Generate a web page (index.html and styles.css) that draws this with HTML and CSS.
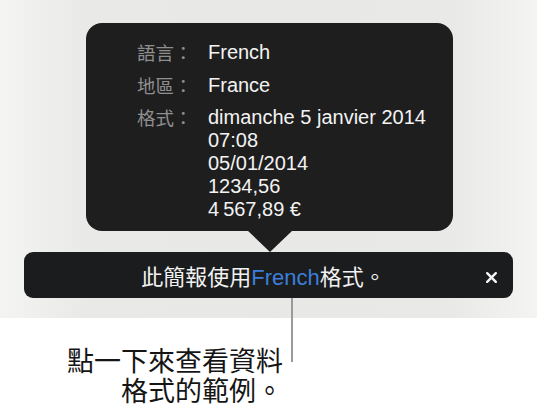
FILE: index.html
```html
<!DOCTYPE html>
<html lang="zh-Hant">
<head>
<meta charset="utf-8">
<title>格式</title>
<link rel="stylesheet" href="styles.css">
</head>
<body>
<div class="stage">
  <div class="popover">
    <div class="rows">
      <div class="label">語言：</div>
      <div class="value">French</div>
      <div class="label">地區：</div>
      <div class="value">France</div>
      <div class="label">格式：</div>
      <div class="value">
        <div>dimanche 5 janvier 2014</div>
        <div>07:08</div>
        <div>05/01/2014</div>
        <div>1234,56</div>
        <div>4&#8201;567,89 €</div>
      </div>
    </div>
  </div>
  <div class="bar">
    <span></span>
    <span class="msg">此簡報使用<span class="lang">French</span>格式。</span>
    <span class="close" aria-label="關閉">
      <svg width="11" height="11" viewBox="0 0 11 11"><path d="M1.2 1.2L9.8 9.8M9.8 1.2L1.2 9.8" stroke="#f4f4f4" stroke-width="2.4" stroke-linecap="round"/></svg>
    </span>
  </div>
  <div class="callout">
    <p class="note">點一下來查看資料<br>格式的範例。</p>
    <span class="leader"></span>
  </div>
</div>
</body>
</html>
```
FILE: styles.css
```css
html, body {
  margin: 0;
  padding: 0;
  background: #fff;
}
body {
  font-family: "Liberation Sans", "Noto Sans CJK TC", sans-serif;
}
.stage {
  width: 537px;
  height: 417px;
  box-sizing: border-box;
  padding-top: 23px;
  overflow: hidden;
  background:
    linear-gradient(#fff, #fff) left bottom / 100% 99px no-repeat,
    linear-gradient(to right, #f4f4f3 0%, #e9e9e7 16%, #e8e8e6 50%, #e9e9e7 84%, #f4f4f3 100%);
}
.popover {
  position: relative;
  margin-left: 86px;
  width: 367px;
  height: 208px;
  box-sizing: border-box;
  padding: 18px 0 0 51px;
  background: #1e1e1f;
  border-radius: 16px;
}
.popover::after {
  content: "";
  position: absolute;
  left: 161px;
  bottom: -21px;
  width: 0;
  height: 0;
  border-left: 23px solid transparent;
  border-right: 23px solid transparent;
  border-top: 22px solid #1e1e1f;
}
.rows {
  display: grid;
  grid-template-columns: 71px 1fr;
  row-gap: 9.5px;
  line-height: 23px;
}
.label {
  font-family: "Noto Sans CJK TC", sans-serif;
  font-size: 18.5px;
  color: #8f8f8f;
}
.value {
  font-size: 20px;
  color: #f3f3f3;
}
.bar {
  margin: 21px 0 0 24px;
  width: 489px;
  height: 46px;
  box-sizing: border-box;
  display: grid;
  grid-template-columns: 1fr auto 1fr;
  align-items: center;
  padding: 0 16px 0 0;
  background: #1b1c1d;
  border-radius: 9px;
}
.msg {
  font-family: "Noto Sans CJK TC", sans-serif;
  font-size: 22px;
  color: #f1f1f1;
  line-height: 46px;
  padding-left: 6px;
}
.lang {
  font-family: "Liberation Sans", sans-serif;
  color: #3d7fdc;
}
.close {
  justify-self: end;
  display: flex;
  width: 11px;
  height: 11px;
  margin-top: 1px;
}
.callout {
  display: flex;
  justify-content: flex-end;
  align-items: flex-start;
  gap: 8px;
  width: 293px;
}
.note {
  margin: 47px 0 0;
  font-family: "Noto Sans CJK TC", sans-serif;
  font-size: 27px;
  line-height: 30px;
  text-align: right;
  color: #151515;
}
.leader {
  flex: none;
  width: 2px;
  height: 64px;
  background: #9a9a9a;
}
```
